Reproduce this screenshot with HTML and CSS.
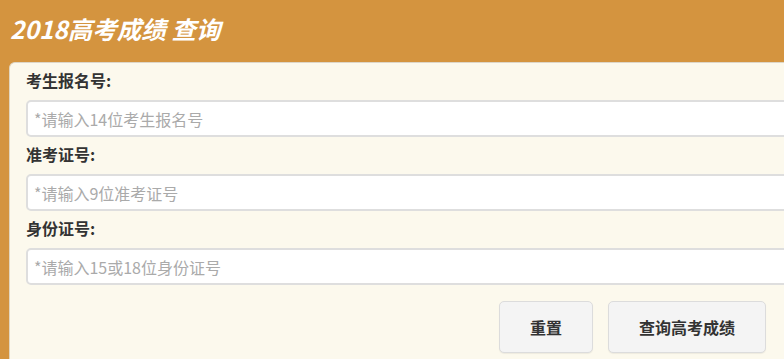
FILE: index.html
```html
<!DOCTYPE html>
<html lang="zh">
<head>
<meta charset="utf-8">
<link rel="stylesheet" href="styles.css">
</head>
<body>
<div class="page">
  <header class="header">
    <h1 class="title">2018高考成绩 查询</h1>
  </header>
  <form class="panel">
    <label class="label">考生报名号:</label>
    <input class="field" type="text" placeholder="*请输入14位考生报名号">
    <label class="label">准考证号:</label>
    <input class="field" type="text" placeholder="*请输入9位准考证号">
    <label class="label">身份证号:</label>
    <input class="field" type="text" placeholder="*请输入15或18位身份证号">
    <div class="actions">
      <button type="reset" class="btn btn-reset">重置</button>
      <button type="button" class="btn btn-submit">查询高考成绩</button>
    </div>
  </form>
</div>
</body>
</html>
```
FILE: styles.css
```css
* { box-sizing: border-box; }
html, body {
  margin: 0;
  padding: 0;
  background: #d4943f;
  overflow: hidden;
}
body {
  font-family: "Microsoft YaHei", "Noto Sans CJK SC", "Noto Sans", sans-serif;
  color: #333;
}
.page {
  width: 784px;
  height: 359px;
  overflow: hidden;
}
.header {
  height: 62px;
  padding-left: 10px;
}
.title {
  margin: 0;
  font-size: 24.5px;
  line-height: 58px;
  font-weight: bold;
  font-style: italic;
  color: #fff;
}
.panel {
  margin-left: 9px;
  width: 840px;
  height: 320px;
  background: #fcf9ed;
  border-top: 1px solid #ddd6c8;
  border-left: 1px solid #e2d6bf;
  border-top-left-radius: 6px;
  padding-left: 16px;
  display: flex;
  flex-direction: column;
}
.label {
  display: block;
  height: 37px;
  line-height: 35px;
  font-size: 16px;
  font-weight: bold;
  color: #333;
}
.field {
  display: block;
  width: 820px;
  height: 37px;
  border: 2px solid #dedede;
  border-radius: 5px;
  background: #fff;
  padding: 0 6px;
  font-family: inherit;
  font-size: 16px;
  color: #333;
  outline: none;
}
.field::placeholder {
  color: #aaa;
}
.actions {
  display: flex;
  gap: 15px;
  margin-top: 16px;
  padding-left: 473px;
}
.btn {
  height: 52px;
  background: #f4f4f4;
  border: 1px solid #dcdcdc;
  border-radius: 5px;
  box-shadow: 0 1px 1px rgba(0,0,0,0.06);
  font-family: inherit;
  font-size: 16px;
  font-weight: bold;
  color: #333;
  padding: 0;
}
.btn-reset { width: 94px; }
.btn-submit { width: 158px; }
```
